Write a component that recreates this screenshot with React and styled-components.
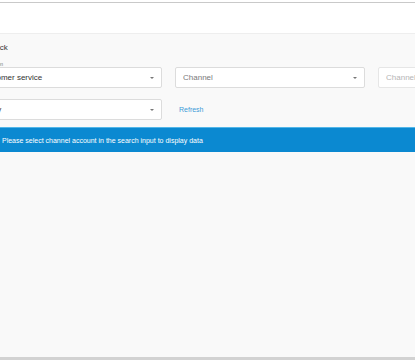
import React from "react";
import styled, { createGlobalStyle } from "styled-components";

const Global = createGlobalStyle`
  html, body { margin: 0; padding: 0; background: #fff; }
  body { font-family: "Liberation Sans", Arial, sans-serif; overflow: hidden; }
`;

const Frame = styled.div`
  width: 415px;
  height: 360px;
  padding-top: 2px;
  box-sizing: border-box;
  display: flex;
  flex-direction: column;
  overflow: hidden;
`;

const Header = styled.div`
  height: 30px;
  border-top: 1px solid #c9c9c9;
  border-bottom: 1px solid #eeeeee;
  background: #ffffff;
  flex: none;
`;

const Main = styled.div`
  flex: 1;
  background: #f9f9f9;
  border-bottom: 3px solid #d2d2d2;
  padding-top: 8px;
  overflow: hidden;
`;

const Filters = styled.div`
  margin-left: -28px;
  display: flex;
  flex-direction: column;
`;

const Back = styled.div`
  margin-left: 18px;
  font-size: 8px;
  line-height: 12px;
  color: #333;
`;

const Label = styled.div`
  margin-top: 7px;
  margin-left: 6px;
  font-size: 5px;
  line-height: 6px;
  color: #777;
  white-space: nowrap;
`;

const Row = styled.div`
  display: flex;
  align-items: center;
  gap: 13px;
  margin-top: ${(p) => p.$mt || 0}px;
  white-space: nowrap;
`;

const SelectBox = styled.div`
  flex: none;
  width: 190px;
  height: 21px;
  box-sizing: border-box;
  border: 1px solid ${(p) => (p.$disabled ? "#e6e6e6" : "#dcdcdc")};
  border-radius: 2px;
  background: #fff;
  display: flex;
  align-items: center;
  padding: 0 7px;
  font-size: 8px;
  color: ${(p) => (p.$placeholder ? (p.$disabled ? "#b5b5b5" : "#7a7a7a") : "#333")};
`;

const Value = styled.span`
  flex: 1;
  overflow: hidden;
`;

const Caret = styled.span`
  width: 0;
  height: 0;
  border-left: 2px solid transparent;
  border-right: 2px solid transparent;
  border-top: 2.5px solid #777;
`;

const Refresh = styled.a`
  margin-left: 4px;
  font-size: 7px;
  color: #3d9bd8;
  text-decoration: none;
`;

const Alert = styled.div`
  margin-top: 7px;
  height: 24px;
  background: #0b89d1;
  border-top: 1px solid #52b6e8;
  color: #fff;
  font-size: 7px;
  display: flex;
  align-items: center;
  padding-left: 2px;
  white-space: nowrap;
`;

const Select = ({ value, placeholder, disabled, caret = true }) => (
  <SelectBox $placeholder={!value} $disabled={disabled}>
    <Value>{value || placeholder}</Value>
    {caret && <Caret />}
  </SelectBox>
);

export default function App() {
  return (
    <>
      <Global />
      <Frame>
        <Header />
        <Main>
          <Filters>
            <Back>Back</Back>
            <Label>Distribution</Label>
            <Row>
              <Select value="Customer service" />
              <Select placeholder="Channel" />
              <Select placeholder="Channel account" disabled caret={false} />
            </Row>
            <Row $mt={11}>
              <Select value="Today" />
              <Refresh href="#">Refresh</Refresh>
            </Row>
          </Filters>
          <Alert>Please select channel account in the search input to display data</Alert>
        </Main>
      </Frame>
    </>
  );
}
